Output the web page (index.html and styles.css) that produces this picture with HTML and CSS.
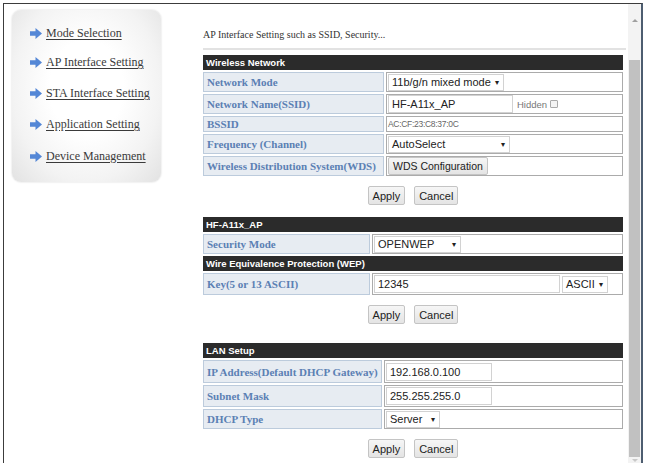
FILE: index.html
```html
<!DOCTYPE html>
<html lang="en">
<head>
  <meta charset="UTF-8">
  <title>AP Interface Setting</title>
  <link rel="stylesheet" href="styles.css">
</head>
<body>
  <div class="frame">

    <!-- left menu -->
    <nav class="menu">
      <a class="menu-item" href="#"><svg class="arrow" viewBox="0 0 12 11"><path d="M0 3.2H5.5V0L12 5.5L5.5 11V7.8H0Z"/></svg><span>Mode Selection</span></a>
      <a class="menu-item" href="#"><svg class="arrow" viewBox="0 0 12 11"><path d="M0 3.2H5.5V0L12 5.5L5.5 11V7.8H0Z"/></svg><span>AP Interface Setting</span></a>
      <a class="menu-item" href="#"><svg class="arrow" viewBox="0 0 12 11"><path d="M0 3.2H5.5V0L12 5.5L5.5 11V7.8H0Z"/></svg><span>STA Interface Setting</span></a>
      <a class="menu-item" href="#"><svg class="arrow" viewBox="0 0 12 11"><path d="M0 3.2H5.5V0L12 5.5L5.5 11V7.8H0Z"/></svg><span>Application Setting</span></a>
      <a class="menu-item" href="#"><svg class="arrow" viewBox="0 0 12 11"><path d="M0 3.2H5.5V0L12 5.5L5.5 11V7.8H0Z"/></svg><span>Device Management</span></a>
    </nav>

    <!-- settings page -->
    <main class="content">
      <p class="intro">AP Interface Setting such as SSID, Security...</p>

      <table class="grid">
        <tr><th colspan="2">Wireless Network</th></tr>
        <tr>
          <td class="lbl w1">Network Mode</td>
          <td class="val"><span class="sel">11b/g/n mixed mode <b>&#9662;</b></span></td>
        </tr>
        <tr>
          <td class="lbl">Network Name(SSID)</td>
          <td class="val"><input class="txt ssid" value="HF-A11x_AP"><span class="hidden">Hidden</span><span class="check"></span></td>
        </tr>
        <tr class="short">
          <td class="lbl">BSSID</td>
          <td class="val mac">AC:CF:23:C8:37:0C</td>
        </tr>
        <tr>
          <td class="lbl">Frequency (Channel)</td>
          <td class="val"><span class="sel auto">AutoSelect <b>&#9662;</b></span></td>
        </tr>
        <tr>
          <td class="lbl">Wireless Distribution System(WDS)</td>
          <td class="val"><button class="btn wds">WDS Configuration</button></td>
        </tr>
      </table>
      <div class="actions"><button class="btn">Apply</button><button class="btn">Cancel</button></div>

      <table class="grid sec">
        <tr><th colspan="2">HF-A11x_AP</th></tr>
        <tr>
          <td class="lbl w2">Security Mode</td>
          <td class="val"><span class="sel mode">OPENWEP <b>&#9662;</b></span></td>
        </tr>
        <tr><th colspan="2">Wire Equivalence Protection (WEP)</th></tr>
        <tr class="tall">
          <td class="lbl">Key(5 or 13 ASCII)</td>
          <td class="val"><input class="txt key" value="12345"><span class="sel ascii">ASCII <b>&#9662;</b></span></td>
        </tr>
      </table>
      <div class="actions"><button class="btn">Apply</button><button class="btn">Cancel</button></div>

      <table class="grid lan">
        <tr><th colspan="2">LAN Setup</th></tr>
        <tr class="taller">
          <td class="lbl w3">IP Address(Default DHCP Gateway)</td>
          <td class="val"><input class="txt ip" value="192.168.0.100"></td>
        </tr>
        <tr class="tall">
          <td class="lbl">Subnet Mask</td>
          <td class="val"><input class="txt ip" value="255.255.255.0"></td>
        </tr>
        <tr>
          <td class="lbl">DHCP Type</td>
          <td class="val"><span class="sel server">Server <b>&#9662;</b></span></td>
        </tr>
      </table>
      <div class="actions"><button class="btn">Apply</button><button class="btn">Cancel</button></div>
    </main>

    <div class="scrollbar">
      <span class="up"></span>
      <span class="thumb"></span>
      <span class="down"></span>
    </div>
  </div>
</body>
</html>
```

FILE: styles.css
```css
* {
  box-sizing: border-box;
}

html, body {
  margin: 0;
  height: 100%;
  overflow: hidden;
  background: #fff;
}

.frame {
  display: flex;
  margin: 3px 0 0 3px;
  width: 640px;
  height: 470px;
  border-top: 1px solid #3c3c3c;
  border-left: 1px solid #3c3c3c;
  border-right: 2px solid #4d5d70;
}

/* left menu */
.menu {
  flex: none;
  display: flex;
  flex-direction: column;
  width: 149px;
  height: 172px;
  margin: 6px 0 0 8px;
  padding: 10px 0 10px 18px;
  border-radius: 9px;
  background: radial-gradient(ellipse at 50% 45%, #ffffff 35%, #f3f3f3 70%, #e2e2e2 100%);
  box-shadow: 0 0 2px #d0d0d0;
}

.menu-item {
  flex: none;
  display: flex;
  align-items: center;
  height: 31px;
  color: #3a3a3a;
  font: 12px "Liberation Serif", serif;
  text-decoration: underline;
  text-underline-offset: 2px;
}

.menu-item:first-child {
  height: 27px;
}

.menu-item:last-child {
  height: 32px;
}

.arrow {
  width: 12px;
  height: 11px;
  margin-right: 4px;
  fill: #5487d6;
}

/* settings page */
.content {
  flex: none;
  width: 437px;
  margin-left: 30px;
  padding: 0 5px 0 10px;
}

.intro {
  margin: 24px -3px 0 2px;
  padding-bottom: 6px;
  border-bottom: 2px solid #e2e2e2;
  color: #333;
  font: 10px/14px "Liberation Serif", serif;
}

.grid {
  width: 424px;
  margin-top: 3px;
  border-spacing: 2px;
  font: 11px "Liberation Sans", Arial, sans-serif;
}

.grid th {
  height: 15px;
  padding: 0 3px;
  background: #2b2b2b;
  color: #fff;
  font: bold 9.5px/15px "Liberation Sans", Arial, sans-serif;
  text-align: left;
}

.grid td {
  height: 20px;
  padding: 0 1px;
}

.grid .short td {
  height: 16px;
}

.grid .tall td {
  height: 22px;
}

.grid .taller td {
  height: 23px;
}

.lbl {
  background: #e7ecf2;
  border: 1px solid #bccbdc;
  color: #5b80b4;
  font: bold 11px "Liberation Serif", serif;
  padding-left: 3px !important;
  white-space: nowrap;
}

.w1 { width: 181px; }
.w2 { width: 167px; }
.w3 { width: 179px; }

.val {
  background: #fff;
  border: 1px solid #ababab;
  white-space: nowrap;
}

.mac {
  color: #666;
  font-size: 8.5px;
  letter-spacing: -0.3px;
}

.sel {
  display: inline-flex;
  align-items: center;
  justify-content: space-between;
  height: 17px;
  padding: 0 4px 0 3px;
  border: 1px solid #d2d2d2;
  background: #fff;
  color: #222;
  vertical-align: middle;
}

.sel b {
  margin-left: 4px;
  font-size: 8px;
  font-weight: normal;
}

.auto { width: 122px; }
.mode { width: 87px; }
.server { width: 54px; }
.ascii { width: 46px; margin-left: 2px; }

.txt {
  height: 18px;
  padding: 0 3px;
  border: 1px solid #d2d2d2;
  color: #222;
  font: 11px "Liberation Sans", Arial, sans-serif;
  vertical-align: middle;
}

.ssid { width: 125px; }
.key { width: 186px; }
.ip { width: 106px; }

.hidden {
  margin-left: 4px;
  color: #777;
  font-size: 9.5px;
  vertical-align: middle;
}

.check {
  display: inline-block;
  width: 8px;
  height: 8px;
  margin-left: 3px;
  border: 1px solid #aaa;
  border-radius: 1px;
  background: #f4f4f4;
  vertical-align: middle;
}

.btn {
  height: 19px;
  padding: 0 4px;
  border: 1px solid #c4c4c4;
  border-radius: 2px;
  background: linear-gradient(#f6f6f6, #e4e4e4);
  color: #222;
  font: 11px "Liberation Sans", Arial, sans-serif;
}

.wds {
  height: 18px;
  padding: 0 4px;
  font-size: 10.5px;
  vertical-align: middle;
}

.actions {
  display: flex;
  justify-content: center;
  gap: 9px;
  width: 424px;
  margin-top: 8px;
}

.sec {
  margin-top: 10px;
}

.lan {
  margin-top: 17px;
}

/* scrollbar */
.scrollbar {
  flex: none;
  display: flex;
  flex-direction: column;
  align-items: center;
  width: 13px;
  background: #f3f3f3;
}

.up, .down {
  width: 0;
  height: 0;
  border-left: 3px solid transparent;
  border-right: 3px solid transparent;
}

.up {
  margin-top: 15px;
  border-bottom: 3px solid #a0a0a0;
}

.down {
  margin-top: 2px;
  border-top: 3px solid #c8c8c8;
}

.thumb {
  width: 11px;
  height: 397px;
  margin-top: 38px;
  background: #c1c1c1;
}
```
